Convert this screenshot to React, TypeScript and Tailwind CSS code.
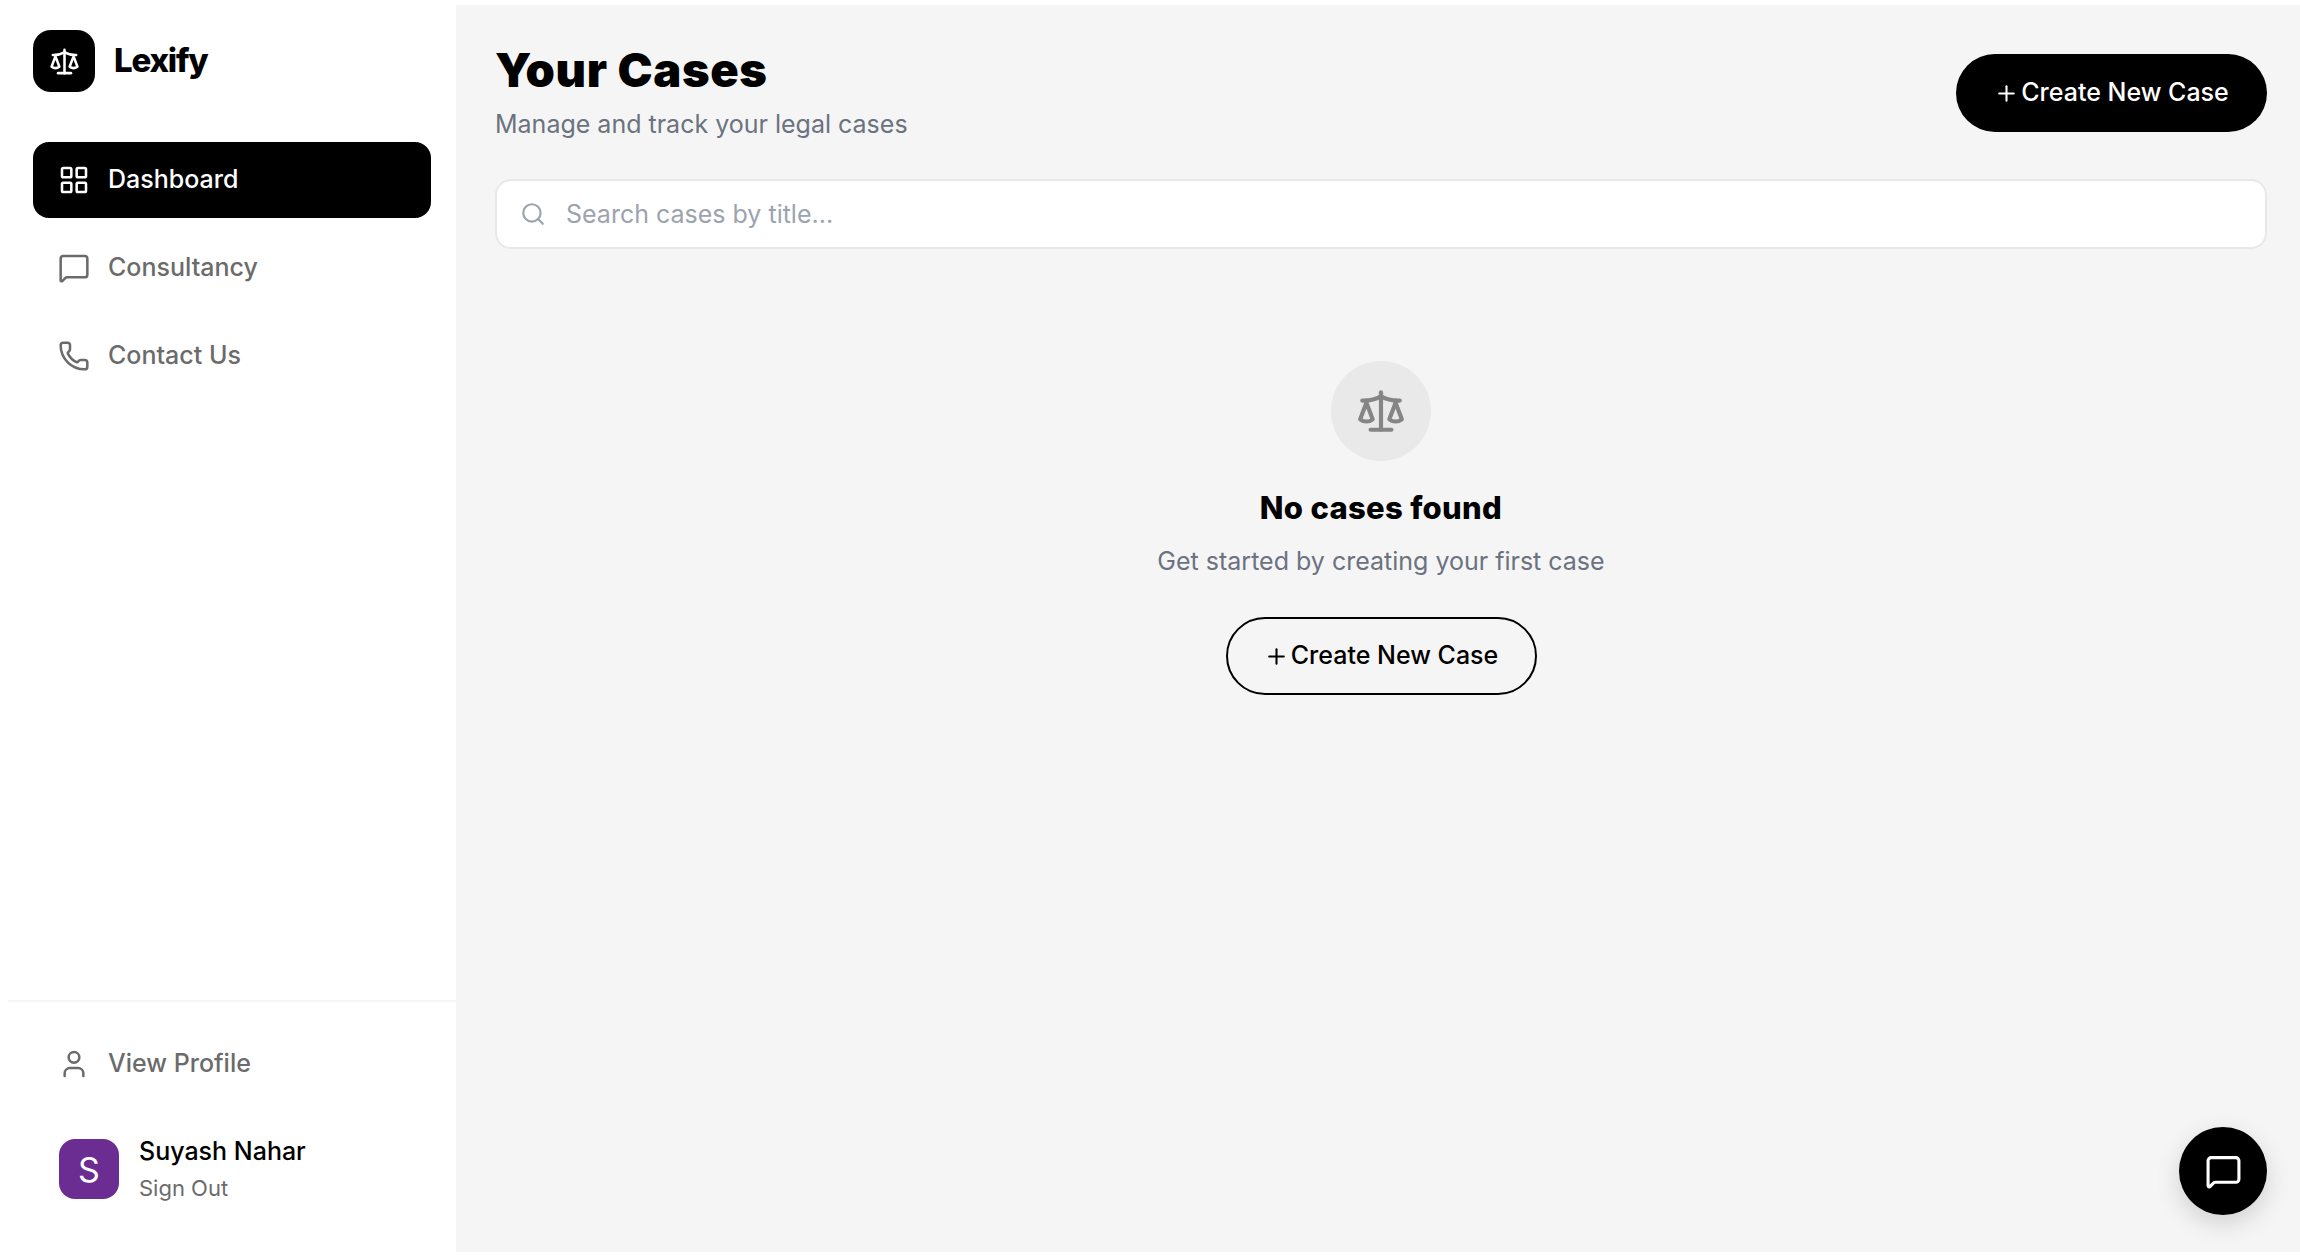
import { LayoutGrid, MessageSquare, Phone, Plus, Scale, Search, User } from "lucide-react";

const sans = "font-['Inter','Liberation_Sans',sans-serif]";

function NavItem({ icon: Icon, label, active = false }: { icon: typeof User; label: string; active?: boolean }) {
  return (
    <div
      className={`flex h-[76px] items-center gap-[18px] rounded-[16px] pl-[25px] text-[25px] font-medium ${
        active ? "bg-black text-white" : "text-[#6b6b6b]"
      }`}
    >
      <Icon size={32} strokeWidth={1.9} />
      <span>{label}</span>
    </div>
  );
}

function CreateButton({ outlined = false }: { outlined?: boolean }) {
  return (
    <button
      className={`flex h-[78px] w-[311px] items-center justify-center gap-[2px] rounded-full text-[25px] font-medium ${
        outlined ? "border-2 border-black text-black" : "bg-black text-white"
      }`}
    >
      <Plus size={25} strokeWidth={2} />
      <span>Create New Case</span>
    </button>
  );
}

export default function App() {
  return (
    <div className={`${sans} flex h-[1256px] w-[2300px] overflow-hidden bg-white`}>
      <aside className="flex w-[456px] shrink-0 flex-col">
        <div className="flex-1 pl-[33px] pr-[25px] pt-[30px]">
          <div className="flex items-center gap-[19px]">
            <div className="flex h-[62px] w-[62px] items-center justify-center rounded-[18px] bg-black text-white">
              <Scale size={31} strokeWidth={2} />
            </div>
            <span className="text-[33px] font-extrabold tracking-[-1.2px] text-black">Lexify</span>
          </div>
          <nav className="mt-[50px] flex flex-col gap-[12px]">
            <NavItem icon={LayoutGrid} label="Dashboard" active />
            <NavItem icon={MessageSquare} label="Consultancy" />
            <NavItem icon={Phone} label="Contact Us" />
          </nav>
        </div>
        <div className="ml-[8px] h-[2px] bg-[#f5f5f5]" />
        <div className="pb-[50px] pl-[33px] pr-[25px] pt-[24px]">
          <NavItem icon={User} label="View Profile" />
          <div className="mt-[30px] flex items-center gap-[20px] pl-[26px]">
            <div className="flex h-[60px] w-[60px] items-center justify-center rounded-[16px] bg-[#6b2d91] text-[34px] text-white">
              S
            </div>
            <div className="flex flex-col">
              <span className="text-[25px] font-medium leading-[38px] text-black">Suyash Nahar</span>
              <span className="text-[22px] leading-[36px] text-[#6b6b6b]">Sign Out</span>
            </div>
          </div>
        </div>
      </aside>
      <main className="relative mb-[4px] mt-[5px] flex-1 bg-[#f5f5f5] pl-[39px] pr-[33px] pt-[40px]">
        <div className="flex items-start justify-between">
          <div>
            <h1 className="text-[47px] font-black leading-[50px] tracking-[0.6px] text-black">Your Cases</h1>
            <p className="mt-[10px] text-[25px] leading-[38px] text-[#6b7280]">Manage and track your legal cases</p>
          </div>
          <div className="mt-[9px]">
            <CreateButton />
          </div>
        </div>
        <div className="mt-[36px] flex h-[70px] items-center gap-[20px] rounded-[16px] border-2 border-[#e8e8e8] bg-white pl-[23px]">
          <Search size={26} strokeWidth={2} className="text-[#9ca3af]" />
          <span className="text-[25px] leading-[30px] text-[#9ca3af]">Search cases by title...</span>
        </div>
        <div className="mt-[112px] flex flex-col items-center">
          <div className="flex h-[100px] w-[100px] items-center justify-center rounded-full bg-[#e9e9e9] text-[#858585]">
            <Scale size={50} strokeWidth={2} />
          </div>
          <h2 className="mt-[25px] text-[31px] font-extrabold leading-[44px] tracking-[0.3px] text-black">No cases found</h2>
          <p className="mt-[12px] text-[25px] leading-[38px] text-[#6b7280]">Get started by creating your first case</p>
          <div className="mt-[37px]">
            <CreateButton outlined />
          </div>
        </div>
        <button className="absolute bottom-[37px] right-[33px] flex h-[88px] w-[88px] items-center justify-center rounded-full bg-black text-white shadow-[0_8px_24px_rgba(0,0,0,0.15)]">
          <MessageSquare size={37} strokeWidth={2} />
        </button>
      </main>
    </div>
  );
}
